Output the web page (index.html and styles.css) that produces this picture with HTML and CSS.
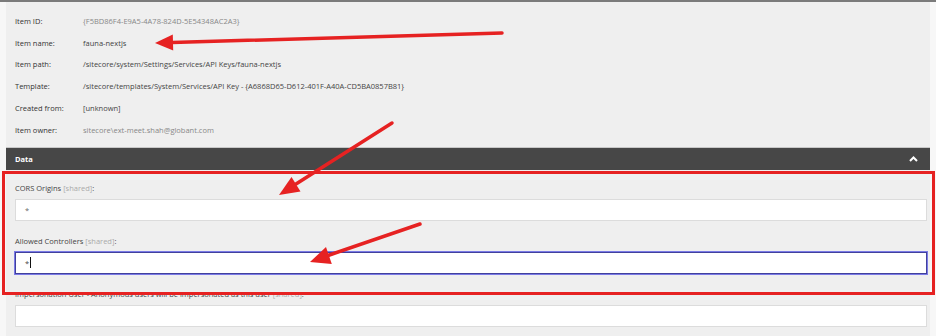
FILE: index.html
```html
<!DOCTYPE html>
<html lang="en">
<head>
  <meta charset="UTF-8">
  <title>Item details</title>
  <link rel="stylesheet" href="styles.css">
</head>
<body>
  <div class="panel">
    <table class="info">
      <tr><td class="label">Item ID:</td><td class="value muted">{F5BD86F4-E9A5-4A78-824D-5E54348AC2A3}</td></tr>
      <tr><td class="label">Item name:</td><td class="value">fauna-nextjs</td></tr>
      <tr><td class="label">Item path:</td><td class="value">/sitecore/system/Settings/Services/API Keys/fauna-nextjs</td></tr>
      <tr><td class="label">Template:</td><td class="value">/sitecore/templates/System/Services/API Key - {A6868D65-D612-401F-A40A-CD5BA0857B81}</td></tr>
      <tr><td class="label">Created from:</td><td class="value">[unknown]</td></tr>
      <tr><td class="label">Item owner:</td><td class="value muted">sitecore\ext-meet.shah@globant.com</td></tr>
    </table>

    <div class="section-head">
      <span>Data</span>
      <svg class="chevron" width="9" height="6" viewBox="0 0 9 6"><path d="M1 5 L4.5 1.5 L8 5" fill="none" stroke="#fff" stroke-width="2"/></svg>
    </div>

    <div class="fields">
      <div class="field">
        <div class="field-label">CORS Origins <span class="shared">[shared]</span>:</div>
        <div class="field-input">*</div>
      </div>
      <div class="field">
        <div class="field-label">Allowed Controllers <span class="shared">[shared]</span>:</div>
        <div class="field-input focused">*<span class="caret"></span></div>
      </div>
      <div class="field">
        <div class="field-label">Impersonation User - Anonymous users will be impersonated as this user <span class="shared">[shared]</span>:</div>
        <div class="field-input"></div>
      </div>
    </div>
  </div>

  <!-- annotations drawn over the screenshot -->
  <div class="highlight"></div>
  <svg class="arrows" width="936" height="336" viewBox="0 0 936 336">
    <g stroke="#e62222" stroke-width="3.5" stroke-linecap="round" fill="#e62222">
      <line x1="502" y1="33" x2="172" y2="42.5"/>
      <polygon stroke="none" points="155,43 173.2,50.5 172.8,34.5"/>
      <line x1="392" y1="123" x2="296" y2="184"/>
      <polygon stroke="none" points="279,195 300.5,191.5 291.5,177"/>
      <line x1="420" y1="224" x2="328" y2="255.5"/>
      <polygon stroke="none" points="310,262 331.8,264 326,247"/>
    </g>
  </svg>
</body>
</html>
```

FILE: styles.css
```css
body {
  margin: 0;
  width: 936px;
  height: 336px;
  overflow: hidden;
  background-color: #f7f7f7;
  border-top: 2px solid #7b7b7b;
  box-sizing: border-box;
  font-family: "Open Sans", Arial, sans-serif;
  font-size: 7.5px;
  color: #333;
  position: relative;
}
.panel {
  margin-left: 6px;
  width: 924px;
  height: 334px;
  background-color: #efefef;
}
.info {
  border-collapse: collapse;
  margin-left: 9px;
  position: relative;
  top: 8px;
}
.info td {
  height: 21.8px;
  padding: 0;
  vertical-align: middle;
}
.info .label {
  width: 68px;
  color: #333;
}
.info .value {
  color: #444;
}
.info .muted {
  color: #888;
}
.section-head {
  margin-top: 14px;
  border-top: 1px solid #c8c8c8;
  height: 22px;
  background-color: #474747;
  color: #fff;
  font-weight: bold;
  display: flex;
  align-items: center;
  justify-content: space-between;
  padding: 0 10px 0 9px;
}
.chevron {
  margin-right: 2px;
}
.fields {
  padding: 12px 3px 0 9px;
}
.field {
  margin-bottom: 14px;
}
.field-label {
  height: 12px;
  line-height: 12px;
  margin-bottom: 5px;
  color: #444;
}
.shared {
  color: #aaa;
}
.field-input {
  height: 22px;
  box-sizing: border-box;
  background-color: #fff;
  border: 1px solid #dcdcdc;
  padding-left: 9px;
  display: flex;
  align-items: center;
  color: #666;
}
.field-input.focused {
  border: 1px solid #41419c;
  box-shadow: 0 0 0 1px #7a7ae6;
  color: #444;
}
.caret {
  display: inline-block;
  width: 1px;
  height: 11px;
  background-color: #111;
  margin-left: 1px;
}
.highlight {
  position: absolute;
  left: 2px;
  top: 169px;
  width: 927px;
  height: 118px;
  border: 3px solid #e62222;
}
.arrows {
  position: absolute;
  left: 0;
  top: -2px;
}
```
